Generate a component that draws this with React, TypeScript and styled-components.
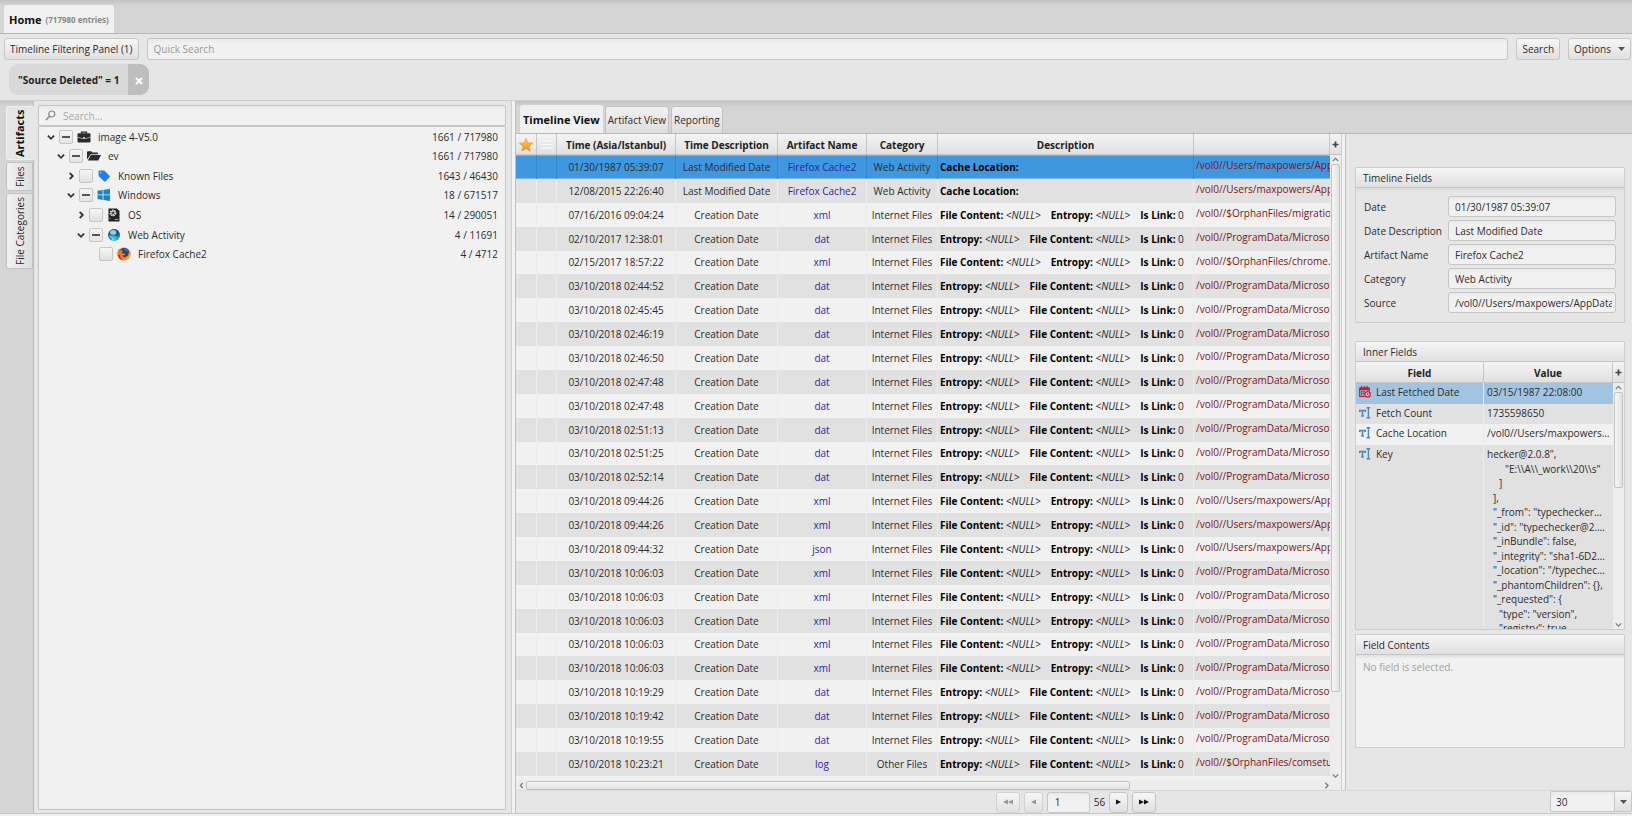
import React, { useEffect, useRef, useState } from "react";
import styled, { createGlobalStyle, css } from "styled-components";

const GlobalStyle = createGlobalStyle`
  *, *::before, *::after { box-sizing: border-box; }
  html, body { margin: 0; height: 100%; }
  #root { height: 100%; }
  body, button, input, select, table {
    font-family: "Open Sans", "Noto Sans", sans-serif;
    font-size: 10px;
    line-height: 16px;
    color: #2c2c2c;
  }
  body { background: #e6e6e6; }
  button, input, select { margin: 0; }
  a { text-decoration: none; }
`;

const line = "#c6c6c6";

const raised = css`
  background: linear-gradient(#f6f6f6, #e0e0e0);
  border: 1px solid ${line};
  border-radius: 3px;
`;

const sunken = css`
  background: linear-gradient(#e8e8e8, #f1f1f1 4px);
  border: 1px solid ${line};
  border-radius: 3px;
`;

/* ---------- shell ---------- */

const Shell = styled.div`
  display: flex;
  flex-direction: column;
  height: 100vh;
  min-height: 560px;
  padding-bottom: 2px;
  background: #f0f0f0;
  overflow: hidden;
`;

const tabStrip = css`
  display: flex;
  align-items: flex-end;
  background: linear-gradient(#c2c2c2, #d5d5d5 6px);
  border-bottom: 1px solid #b8b8b8;
`;

const WindowTabs = styled.nav`
  ${tabStrip}
  flex: none;
  height: 34px;
  padding-left: 4px;
`;

const HomeTab = styled.button`
  display: flex;
  align-items: center;
  gap: 4px;
  height: 28px;
  padding: 2px 5px 0;
  border: 0;
  border-radius: 3px 3px 0 0;
  background: #f0f0f0;
  color: #111;
  font-size: 11px;
  font-weight: 700;
  small { font-size: 8px; color: #888; }
`;

const Toolbar = styled.header`
  flex: none;
  background: #e6e6e6;
  padding: 4px 1px 0 4px;
  height: 67px;
  border-bottom: 1px solid #cfcfcf;
`;

const SearchRow = styled.form`
  display: flex;
  gap: 8px;
  height: 22px;
`;

const Button = styled.button`
  ${raised}
  display: flex;
  align-items: center;
  justify-content: center;
  gap: 7px;
  padding: 0 5px;
  height: 22px;
  white-space: nowrap;
`;

const QuickSearch = styled.input`
  ${sunken}
  flex: 1;
  min-width: 0;
  padding: 0 6px;
  height: 22px;
  &::placeholder { color: #999; }
`;

const Chip = styled.div`
  display: inline-flex;
  align-items: stretch;
  height: 31px;
  margin: 4px 0 0 5px;
  border-radius: 9px;
  overflow: hidden;
  background: #d9d9d9;
  color: #222;
  font-weight: 700;
  line-height: 31px;
  span { padding: 1px 9px 0; }
`;

const ChipClose = styled.button`
  display: flex;
  align-items: center;
  justify-content: center;
  width: 21px;
  padding: 2px 0 0;
  border: 0;
  background: #bebebe;
`;

const Main = styled.main`
  display: flex;
  flex: 1;
  min-height: 0;
  background: #e6e6e6;
  border-bottom: 1px solid ${line};
`;

/* ---------- left side ---------- */

const SideTabs = styled.nav`
  flex: none;
  display: flex;
  flex-direction: column;
  gap: 2px;
  width: 34px;
  padding: 5px 0 0 6px;
  background: linear-gradient(#c6c6c6, #d5d5d5 5px);
  border-right: 1px solid #bdbdbd;
`;

const SideTab = styled.button<{ $active?: boolean; $h: number }>`
  display: flex;
  align-items: center;
  justify-content: center;
  height: ${(p) => p.$h}px;
  width: ${(p) => (p.$active ? 28 : 27)}px;
  padding: 0;
  border: 1px solid ${(p) => (p.$active ? "#efefef" : "#c2c2c2")};
  border-left-color: ${(p) => (p.$active ? "#e6e6e6" : "#c2c2c2")};
  border-radius: 0 3px 3px 0;
  background: ${(p) => (p.$active ? "#e6e6e6" : "linear-gradient(270deg, #f2f2f2, #dedede)")};
  font-size: ${(p) => (p.$active ? 11 : 10)}px;
  font-weight: ${(p) => (p.$active ? 700 : 400)};
  color: ${(p) => (p.$active ? "#111" : "#2c2c2c")};
  writing-mode: vertical-rl;
  transform: rotate(180deg);
  white-space: nowrap;
`;

const TreePane = styled.section`
  flex: 0 0 477px;
  display: flex;
  flex-direction: column;
  padding: 4px 5px 3px 4px;
`;

const TreeSearch = styled.label`
  ${sunken}
  display: flex;
  align-items: center;
  gap: 7px;
  height: 21px;
  padding: 0 6px;
  border-radius: 2px;
  input {
    flex: 1;
    border: 0;
    padding: 0;
    outline: 0;
    background: transparent;
  }
  input::placeholder { color: #aaa; }
`;

const TreeBody = styled.div`
  flex: 1;
  background: #f1f1f1;
  border: 1px solid ${line};
`;

const TreeList = styled.ul`
  display: grid;
  grid-auto-rows: 1fr;
  height: 137px;
  margin: 0;
  padding: 0 7px 0 5px;
  list-style: none;
`;

const TreeItem = styled.li<{ $level: number }>`
  display: flex;
  align-items: center;
  padding-left: ${(p) => p.$level * 10}px;
`;

const Twisty = styled.button`
  display: flex;
  align-items: center;
  justify-content: center;
  width: 15px;
  height: 14px;
  padding: 0 1px 0 0;
  border: 0;
  background: none;
`;

const Tick = styled.input`
  appearance: none;
  ${raised}
  width: 14px;
  height: 14px;
  border-radius: 2px;
  &:indeterminate {
    background: linear-gradient(#555, #555) center / 8px 2px no-repeat, linear-gradient(#f6f6f6, #e4e4e4);
  }
`;

const TreeIcon = styled.span`
  display: flex;
  width: 14px;
  height: 14px;
  margin: 0 7px 0 4px;
`;

const TreeLabel = styled.label`flex: 1;`;

const Split = styled.div`
  flex: none;
  width: 5px;
  background: linear-gradient(90deg, #cfcfcf 1px, #f4f4f4 1px, #f0f0f0 4px, #c2c2c2 4px);
`;

/* ---------- centre ---------- */

const Work = styled.section`
  flex: 1;
  min-width: 0;
  display: flex;
  flex-direction: column;
`;

const ViewTabs = styled.nav`
  ${tabStrip}
  flex: none;
  height: 33px;
  gap: 2px;
  padding-left: 4px;
`;

const ViewTab = styled.button<{ $active?: boolean }>`
  height: ${(p) => (p.$active ? 28 : 27)}px;
  padding: 0 2px;
  border: 1px solid ${(p) => (p.$active ? "#f0f0f0" : "#c2c2c2")};
  border-bottom: 0;
  border-radius: 3px 3px 0 0;
  background: ${(p) => (p.$active ? "#f0f0f0" : "linear-gradient(#f2f2f2, #dedede)")};
  font-size: ${(p) => (p.$active ? 11 : 10)}px;
  font-weight: ${(p) => (p.$active ? 700 : 400)};
  color: ${(p) => (p.$active ? "#111" : "#2c2c2c")};
`;

const WorkBody = styled.div`
  flex: 1;
  min-height: 0;
  display: flex;
`;

const GridArea = styled.div`
  flex: 1;
  min-width: 0;
  display: flex;
  flex-direction: column;
`;

const GridRow = styled.div`
  flex: 1;
  min-height: 0;
  display: flex;
`;

const Clip = styled.div`
  flex: 1;
  min-width: 0;
  overflow: hidden;
  background: #f1f1f1;
`;

const DataTable = styled.table`
  width: 100%;
  height: 100%;
  table-layout: fixed;
  border-collapse: separate;
  border-spacing: 0;
`;

const headCell = css`
  height: 21px;
  padding: 1px 2px 0;
  background: linear-gradient(#f4f4f4, #e0e0e0);
  border-right: 1px solid ${line};
  border-bottom: 1px solid ${line};
  color: #222;
  font-weight: 700;
  text-align: center;
  white-space: nowrap;
  svg { display: block; margin: 0 auto; }
`;

const Th = styled.th<{ $w?: number }>`
  ${headCell}
  ${(p) => (p.$w ? `width: ${p.$w}px;` : "")}
`;

const Tr = styled.tr<{ $selected?: boolean }>`
  background: #f1f1f1;
  &:nth-child(even) { background: #e1e1e1; }
  ${(p) =>
    p.$selected &&
    css`
      background: #3f97df;
      td {
        border-right-color: #3489cf;
        box-shadow: inset 0 1px #79b5e8, inset 0 -1px #79b5e8;
      }
    `}
`;

const Td = styled.td<{ $align?: string }>`
  padding: 0 2px;
  border-right: 1px solid #ececec;
  text-align: ${(p) => p.$align || "center"};
  white-space: nowrap;
  overflow: hidden;
  &:last-child { border-right: 0; padding-right: 0; }
`;

const Filler = styled.td`
  height: 4px;
  padding: 0;
`;

const Fact = styled.span`
  margin-right: 10px;
  color: #222;
  b { color: #000; }
  &:last-child { margin-right: 0; }
`;

const Kind = styled.a`color: #2e1fa8;`;

const PathLink = styled.a`
  display: block;
  padding-bottom: 3px;
  color: #7a1420;
`;

const VBar = styled.div`
  flex: none;
  display: flex;
  flex-direction: column;
  align-items: center;
  width: 11px;
  background: #ededed;
`;

const PlusButton = styled.button`
  ${headCell}
  flex: none;
  display: flex;
  align-items: center;
  width: 100%;
  padding: 0;
  border-width: 0 0 1px;
`;

const BarArrow = styled.button`
  flex: none;
  display: flex;
  align-items: center;
  justify-content: center;
  width: 10px;
  height: 9px;
  padding: 0;
  border: 0;
  background: none;
`;

const VTrack = styled.div`
  flex: 1;
  width: 9px;
  min-height: 0;
`;

const VThumb = styled.div`
  border: 1px solid #c2c2c2;
  border-radius: 2px;
  background: linear-gradient(90deg, #f6f6f6, #e2e2e2);
`;

const HBar = styled.div`
  flex: none;
  display: flex;
  align-items: center;
  height: 10px;
  padding-right: 10px;
  background: #ededed;
`;

const HTrack = styled.div`
  flex: 1;
  height: 9px;
`;

const HThumb = styled.div`
  width: 76%;
  height: 9px;
  border: 1px solid #c2c2c2;
  border-radius: 2px;
  background: linear-gradient(#f6f6f6, #e2e2e2);
`;

const Pager = styled.footer`
  flex: none;
  display: grid;
  grid-template-columns: 1fr auto 1fr;
  height: 23px;
  border-top: 1px solid #d8d8d8;
`;

const PagerGroup = styled.div`
  grid-column: 2;
  display: flex;
  align-items: center;
  gap: 4px;
  padding-left: 4px;
`;

const PageButton = styled(Button)<{ $w: number }>`
  width: ${(p) => p.$w}px;
  height: 21px;
  padding: 0;
  color: #111;
  &:disabled { color: #999; border-color: #d2d2d2; }
`;

const PageInput = styled.input`
  ${sunken}
  width: 43px;
  height: 21px;
  padding: 0 7px;
`;

const SizeBox = styled.label`
  ${sunken}
  justify-self: end;
  display: flex;
  width: 82px;
  height: 21px;
  border-radius: 2px;
  select {
    appearance: none;
    flex: 1;
    padding: 0 5px;
    border: 0;
    background: none;
  }
  span {
    display: flex;
    align-items: center;
    justify-content: center;
    width: 17px;
    border-left: 1px solid ${line};
    background: linear-gradient(#f6f6f6, #e0e0e0);
  }
`;

/* ---------- details ---------- */

const Details = styled.aside`
  flex: 0 0 286px;
  min-width: 0;
  padding: 33px 7px 0 9px;
  background: #e6e6e6;
`;

const Panel = styled.section`
  border: 1px solid #cdcdcd;
  border-radius: 2px 2px 0 0;
`;

const PanelTitle = styled.h2`
  margin: 0;
  height: 20px;
  padding: 0 7px;
  border-bottom: 1px solid ${line};
  background: linear-gradient(#f5f5f5, #e0e0e0);
  font-size: 10px;
  font-weight: 400;
  line-height: 20px;
`;

const FieldList = styled.div`
  display: grid;
  gap: 3px;
  padding: 8px 8px 9px;
  background: linear-gradient(#dadada, #e6e6e6 4px);
`;

const FieldRow = styled.label`
  display: flex;
  align-items: center;
  span {
    flex: none;
    width: 84px;
    white-space: nowrap;
  }
  input {
    ${sunken}
    flex: 1;
    min-width: 0;
    height: 21px;
    padding: 0 3px 0 6px;
  }
`;

const InnerPanel = styled(Panel)`margin-top: 18px;`;

const InnerGrid = styled.div`
  display: flex;
  height: 267px;
  overflow: hidden;
  background: #e1e1e1;
`;

const InnerClip = styled.div`
  flex: 1;
  min-width: 0;
  overflow: hidden;
`;

const InnerTable = styled.table`
  width: 100%;
  table-layout: fixed;
  border-collapse: separate;
  border-spacing: 0;
`;

const InnerRow = styled.tr<{ $tone?: "selected" | "light" }>`
  height: ${(p) => (p.$tone ? 21 : 20)}px;
  background: ${(p) =>
    p.$tone === "selected" ? "#a0c4e1" : p.$tone === "light" ? "#f1f1f1" : "#e1e1e1"};
`;

const InnerTd = styled.td`
  padding: 1px 3px;
  border-right: 1px solid #ececec;
  vertical-align: top;
  white-space: nowrap;
  overflow: hidden;
  text-overflow: ellipsis;
  &:last-child { border-right: 0; padding-right: 3px; }
`;

const FieldName = styled.span`
  display: flex;
  align-items: center;
  gap: 5px;
`;

const JsonLines = styled.div`
  display: grid;
  grid-auto-rows: 1fr;
  height: 189px;
`;

const JsonLine = styled.div<{ $indent: number }>`
  padding-left: ${(p) => p.$indent * 6}px;
  overflow: hidden;
  text-overflow: ellipsis;
`;

const ContentsPanel = styled(Panel)`
  margin-top: 4px;
  background: #f1f1f1;
`;

const Empty = styled.p`
  margin: 0;
  height: 92px;
  padding: 4px 7px;
  background: linear-gradient(#dedede, #f1f1f1 4px);
  color: #a2a2a2;
`;

/* ---------- icons ---------- */

const Chevron = ({ dir, size = 9, color = "#333", w = 2 }: { dir: "up" | "down" | "left" | "right"; size?: number; color?: string; w?: number }) => {
  const d = { up: "M1 6.5 4.5 3 8 6.5", down: "M1 3 4.5 6.5 8 3", left: "M6 1 3 4.5 6 8", right: "M3 1 6.5 4.5 3 8" }[dir];
  return (
    <svg width={size} height={size} viewBox="0 0 9 9" fill="none" stroke={color} strokeWidth={w}>
      <path d={d} />
    </svg>
  );
};

const Caret = () => (
  <svg width="7" height="4" viewBox="0 0 7 4" fill="#555"><path d="M0 0h7L3.500 4z" /></svg>
);

const Plus = () => (
  <svg width="7" height="7" viewBox="0 0 7 7" stroke="#444" strokeWidth="1.700"><path d="M3.500.500v6M.500 3.500h6" /></svg>
);

const Cross = () => (
  <svg width="8" height="8" viewBox="0 0 8 8" stroke="#fff" strokeWidth="2"><path d="M1 1l6 6M7 1 1 7" /></svg>
);

const Arrows = ({ count, left }: { count: 1 | 2; left?: boolean }) => (
  <svg width={count * 5} height="6" viewBox={`0 0 ${count * 5} 6`} fill="currentColor">
    {Array.from({ length: count }, (_, i) => (
      <path key={i} d={left ? `M${i * 5 + 5} .5v5L${i * 5} 3z` : `M${i * 5} .5v5L${i * 5 + 5} 3z`} />
    ))}
  </svg>
);

const Magnifier = () => (
  <svg width="11" height="11" viewBox="0 0 11 11" fill="none" stroke="#888" strokeWidth="1.200">
    <circle cx="6.800" cy="4" r="3" />
    <path d="M4.600 6.200 1 10" strokeWidth="1.600" />
  </svg>
);

const Star = () => (
  <svg width="14" height="14" viewBox="0 0 14 14">
    <defs>
      <linearGradient id="star" x1="0" y1="0" x2="0" y2="1">
        <stop offset="0" stopColor="#ffd65a" />
        <stop offset="1" stopColor="#f58a14" />
      </linearGradient>
    </defs>
    <path d="M7 .6 8.900 4.900l4.600.4-3.500 3.100 1.100 4.700L7 10.600l-4.100 2.500L4 8.400.5 5.300l4.600-.4z" fill="url(#star)" stroke="#e8932a" strokeWidth=".7" />
  </svg>
);

const Lines = () => (
  <svg width="12" height="9" viewBox="0 0 12 9" fill="#fafafa" stroke="#d6d6d6" strokeWidth=".3">
    <path d="M0 0h12v2H0zM0 3.500h12v2H0zM0 7h12v2H0z" />
  </svg>
);

const Briefcase = () => (
  <svg width="14" height="14" viewBox="0 0 14 14">
    <path d="M4.500 3.500V2.200h5v1.300" fill="none" stroke="#2b2b2b" strokeWidth="1.300" />
    <path d="M1.500 3.200h11q1 0 1 1V7l-5 1.200H5.500L.5 7V4.200q0-1 1-1z" fill="#2b2b2b" />
    <path d="M.5 7.500l5 1.300h3l5-1.300v3.900q0 1-1 1h-11q-1 0-1-1z" fill="#2b2b2b" />
    <path d="M6 7.200h2v1.200H6z" fill="#f1f1f1" />
  </svg>
);

const FolderOpen = () => (
  <svg width="14" height="14" viewBox="0 0 14 14" fill="#2b2b2b">
    <path d="M0 10.500V3.200q0-.9.900-.9h3.300l1.200 1.300h4.700q.9 0 .9.900v.8H3.700z" />
    <path d="M3.900 6.100H14l-2.700 5.500H.8z" />
  </svg>
);

const Tag = () => (
  <svg width="14" height="14" viewBox="0 0 14 14">
    <path d="M1.500 2.500q0-.8.800-.9l4.400-.2q.5 0 .8.400l5.200 5.200q.5.500 0 1L8.400 12.600q-.5.400-1 0L2 7.400q-.3-.3-.3-.8z" fill="#1a80fa" />
    <circle cx="3.700" cy="3.600" r=".9" fill="#9cc8fb" />
  </svg>
);

const WindowsLogo = () => (
  <svg width="14" height="14" viewBox="0 0 14 14" fill="#1b84c4">
    <path d="M.5 2.800 5.600 2v4.500H.5zM6.400 1.900 13 .8v5.700H6.400zM.5 7.300h5.100v4.600l-5.100-.8zM6.400 7.300H13v5.800l-6.600-1z" />
  </svg>
);

const DriveIcon = () => (
  <svg width="14" height="14" viewBox="0 0 14 14">
    <path d="M1.500.5h8.300l2.700 2.600v10.400h-11z" fill="#222" />
    <circle cx="6" cy="5" r="2.600" fill="none" stroke="#eee" strokeWidth="1.600" strokeDasharray="1.500 .7" />
    <circle cx="6" cy="5" r="1.700" fill="#eee" />
    <circle cx="6" cy="5" r="1.100" fill="#222" />
    <path d="M2.500 10.500h1.200M7.500 11.500h4" stroke="#999" strokeWidth="1" />
  </svg>
);

const Globe = () => (
  <svg width="14" height="14" viewBox="0 0 14 14">
    <defs>
      <radialGradient id="globe" cx=".5" cy=".85" r=".9">
        <stop offset="0" stopColor="#4fd4ee" />
        <stop offset=".5" stopColor="#1782b4" />
        <stop offset="1" stopColor="#0b3a5c" />
      </radialGradient>
    </defs>
    <circle cx="7" cy="7" r="6" fill="url(#globe)" />
    <ellipse cx="6.300" cy="4.300" rx="3.200" ry="2.300" fill="#b9e2f2" opacity=".8" />
    <path d="M9 2.200q2 1.500 1.400 4.200L8.600 8" fill="none" stroke="#0e4a70" strokeWidth="1.200" />
    <path d="M2.500 8.500 5 9l1 3" fill="none" stroke="#8feaf8" strokeWidth="1" opacity=".8" />
  </svg>
);

const Firefox = () => (
  <svg width="14" height="14" viewBox="0 0 14 14">
    <circle cx="7" cy="7" r="6.500" fill="#e8601c" />
    <circle cx="7.400" cy="5.600" r="4.600" fill="#1d4a86" />
    <path d="M7 1.200q3 .3 4 3l-2-1z" fill="#4fa6dc" />
    <path d="M.6 5Q1 2.500 2.300 1.500q0 1.300.8 1.900 1.600-.3 2.900.4L4.800 5.600q.3 1.200 1.600 1 1.400-.4 2 .4-.8 2-3.200 1.500 1.600 2.400 4.200 1.300 3-1.500 2.200-5.500Q13.400 6 13.500 7A6.500 6.500 0 0 1 .6 8z" fill="#f07c1e" />
    <path d="M12.200 5.200q1.600 3.200-1.200 6-2.600 2-5.600 1.200 4.500-.4 6-3.400.9-1.900.8-3.800z" fill="#fbc22d" />
    <path d="M.7 8.200Q1.600 12 5.600 13.300 3 11 2.800 7.800z" fill="#b8301b" />
  </svg>
);

const Calendar = () => (
  <svg width="12" height="12" viewBox="0 0 12 12">
    <path d="M.7 2h9.600v3M.7 2v8.300h5" fill="none" stroke="#b8203c" strokeWidth="1.200" />
    <path d="M.5 1.700h10v2.600H.5z" fill="#b8203c" />
    <path d="M2.700 0v2M5.500 0v2M8.200 0v2" stroke="#b8203c" strokeWidth="1.200" />
    <path d="M2 5.500h1.300M4.300 5.500h1.300M2 7.500h1.300M4.300 7.500h1.300M2.700 5v4M5 5v4" stroke="#b8203c" strokeWidth="1" />
    <circle cx="8.600" cy="8.400" r="2.700" fill="#e7b9c5" stroke="#b8203c" strokeWidth="1.200" />
    <path d="M8.500 7v1.600h1.300" fill="none" stroke="#b8203c" strokeWidth=".8" />
  </svg>
);

const TextField = () => (
  <svg width="12" height="12" viewBox="0 0 12 12" fill="none" stroke="#4a86bd">
    <path d="M.7 5V3.500h5.600V5M3.500 3.500V9M2.200 9h2.600" strokeWidth="1.600" />
    <path d="M7.600.8h3.600M9.400.8v10M7.600 10.800h3.600" strokeWidth="1.400" />
  </svg>
);

/* ---------- data ---------- */

type TreeNode = { level: number; name: string; count: string; open?: boolean; partial?: boolean; leaf?: boolean; icon: React.ReactNode };

const tree: TreeNode[] = [
  { level: 0, name: "image 4-V5.0", count: "1661 / 717980", open: true, partial: true, icon: <Briefcase /> },
  { level: 1, name: "ev", count: "1661 / 717980", open: true, partial: true, icon: <FolderOpen /> },
  { level: 2, name: "Known Files", count: "1643 / 46430", icon: <Tag /> },
  { level: 2, name: "Windows", count: "18 / 671517", open: true, partial: true, icon: <WindowsLogo /> },
  { level: 3, name: "OS", count: "14 / 290051", icon: <DriveIcon /> },
  { level: 3, name: "Web Activity", count: "4 / 11691", open: true, partial: true, icon: <Globe /> },
  { level: 4, name: "Firefox Cache2", count: "4 / 4712", leaf: true, icon: <Firefox /> },
];

type Entry = [time: string, what: string, artifact: string, category: string, facts: "cache" | "content" | "entropy", path: string];

const M = "Last Modified Date";
const C = "Creation Date";
const users = "/vol0//Users/maxpowers/AppData/Local";
const program = "/vol0//ProgramData/Microsoft/Windows";

const entries: Entry[] = [
  ["01/30/1987 05:39:07", M, "Firefox Cache2", "Web Activity", "cache", users],
  ["12/08/2015 22:26:40", M, "Firefox Cache2", "Web Activity", "cache", users],
  ["07/16/2016 09:04:24", C, "xml", "Internet Files", "content", "/vol0//$OrphanFiles/migration.xml"],
  ["02/10/2017 12:38:01", C, "dat", "Internet Files", "entropy", program],
  ["02/15/2017 18:57:22", C, "xml", "Internet Files", "content", "/vol0//$OrphanFiles/chrome.VisualElements.xml"],
  ["03/10/2018 02:44:52", C, "dat", "Internet Files", "entropy", program],
  ["03/10/2018 02:45:45", C, "dat", "Internet Files", "entropy", program],
  ["03/10/2018 02:46:19", C, "dat", "Internet Files", "entropy", program],
  ["03/10/2018 02:46:50", C, "dat", "Internet Files", "entropy", program],
  ["03/10/2018 02:47:48", C, "dat", "Internet Files", "entropy", program],
  ["03/10/2018 02:47:48", C, "dat", "Internet Files", "entropy", program],
  ["03/10/2018 02:51:13", C, "dat", "Internet Files", "entropy", program],
  ["03/10/2018 02:51:25", C, "dat", "Internet Files", "entropy", program],
  ["03/10/2018 02:52:14", C, "dat", "Internet Files", "entropy", program],
  ["03/10/2018 09:44:26", C, "xml", "Internet Files", "content", users],
  ["03/10/2018 09:44:26", C, "xml", "Internet Files", "content", users],
  ["03/10/2018 09:44:32", C, "json", "Internet Files", "content", users],
  ["03/10/2018 10:06:03", C, "xml", "Internet Files", "content", program],
  ["03/10/2018 10:06:03", C, "xml", "Internet Files", "content", program],
  ["03/10/2018 10:06:03", C, "xml", "Internet Files", "content", program],
  ["03/10/2018 10:06:03", C, "xml", "Internet Files", "content", program],
  ["03/10/2018 10:06:03", C, "xml", "Internet Files", "content", program],
  ["03/10/2018 10:19:29", C, "dat", "Internet Files", "entropy", program],
  ["03/10/2018 10:19:42", C, "dat", "Internet Files", "entropy", program],
  ["03/10/2018 10:19:55", C, "dat", "Internet Files", "entropy", program],
  ["03/10/2018 10:23:21", C, "log", "Other Files", "entropy", "/vol0//$OrphanFiles/comsetup.log"],
];

const fields: [string, string][] = [
  ["Date", "01/30/1987 05:39:07"],
  ["Date Description", "Last Modified Date"],
  ["Artifact Name", "Firefox Cache2"],
  ["Category", "Web Activity"],
  ["Source", "/vol0//Users/maxpowers/AppData/Local"],
];

const json: [number, string][] = [
  [0, 'hecker@2.0.8",'],
  [3, '"E:\\\\A\\\\_work\\\\20\\\\s"'],
  [2, "]"],
  [1, "],"],
  [1, '"_from": "typechecker@2.0.8",'],
  [1, '"_id": "typechecker@2.0.8-beta",'],
  [1, '"_inBundle": false,'],
  [1, '"_integrity": "sha1-6D2oS7ZMWEzLNFg4",'],
  [1, '"_location": "/typechecker",'],
  [1, '"_phantomChildren": {},'],
  [1, '"_requested": {'],
  [2, '"type": "version",'],
  [2, '"registry": true,'],
];

/* ---------- parts ---------- */

function TreeTick({ id, partial }: { id: string; partial?: boolean }) {
  const ref = useRef<HTMLInputElement>(null);
  useEffect(() => {
    if (ref.current) ref.current.indeterminate = !!partial;
  }, [partial]);
  return <Tick ref={ref} id={id} type="checkbox" />;
}

function Facts({ kind }: { kind: Entry[4] }) {
  if (kind === "cache") return <Fact><b>Cache Location:</b></Fact>;
  const names = kind === "content" ? ["File Content:", "Entropy:"] : ["Entropy:", "File Content:"];
  return (
    <>
      {names.map((n) => (
        <Fact key={n}><b>{n}</b> <i>&lt;NULL&gt;</i></Fact>
      ))}
      <Fact><b>Is Link:</b> 0</Fact>
    </>
  );
}

function TimelineTable() {
  const [selected, setSelected] = useState(0);
  return (
    <DataTable>
      <thead>
        <tr>
          <Th $w={21} aria-label="Bookmarked"><Star /></Th>
          <Th $w={20} aria-label="Notes"><Lines /></Th>
          <Th $w={119}>Time (Asia/Istanbul)</Th>
          <Th $w={102}>Time Description</Th>
          <Th $w={89}>Artifact Name</Th>
          <Th $w={71}>Category</Th>
          <Th $w={256}>Description</Th>
          <Th aria-label="Source" />
        </tr>
      </thead>
      <tbody>
        {entries.map(([time, what, artifact, category, facts, path], i) => (
          <Tr key={i} $selected={i === selected} onClick={() => setSelected(i)}>
            <Td />
            <Td />
            <Td>{time}</Td>
            <Td>{what}</Td>
            <Td><Kind href="#artifact">{artifact}</Kind></Td>
            <Td>{category}</Td>
            <Td $align="left"><Facts kind={facts} /></Td>
            <Td $align="left"><PathLink href="#source">{path}</PathLink></Td>
          </Tr>
        ))}
        <tr><Filler colSpan={8} /></tr>
      </tbody>
    </DataTable>
  );
}

function DetailsPane() {
  return (
    <Details>
      <Panel>
        <PanelTitle>Timeline Fields</PanelTitle>
        <FieldList>
          {fields.map(([name, value]) => (
            <FieldRow key={name}>
              <span>{name}</span>
              <input readOnly value={value} />
            </FieldRow>
          ))}
        </FieldList>
      </Panel>

      <InnerPanel>
        <PanelTitle>Inner Fields</PanelTitle>
        <InnerGrid>
          <InnerClip>
            <InnerTable>
              <thead>
                <tr><Th $w={128}>Field</Th><Th>Value</Th></tr>
              </thead>
              <tbody>
                <InnerRow $tone="selected">
                  <InnerTd><FieldName><Calendar />Last Fetched Date</FieldName></InnerTd>
                  <InnerTd>03/15/1987 22:08:00</InnerTd>
                </InnerRow>
                <InnerRow>
                  <InnerTd><FieldName><TextField />Fetch Count</FieldName></InnerTd>
                  <InnerTd>1735598650</InnerTd>
                </InnerRow>
                <InnerRow $tone="light">
                  <InnerTd><FieldName><TextField />Cache Location</FieldName></InnerTd>
                  <InnerTd>{users}</InnerTd>
                </InnerRow>
                <InnerRow>
                  <InnerTd><FieldName><TextField />Key</FieldName></InnerTd>
                  <InnerTd>
                    <JsonLines>
                      {json.map(([indent, text], i) => <JsonLine key={i} $indent={indent}>{text}</JsonLine>)}
                    </JsonLines>
                  </InnerTd>
                </InnerRow>
              </tbody>
            </InnerTable>
          </InnerClip>
          <VBar>
            <PlusButton aria-label="Choose columns"><Plus /></PlusButton>
            <BarArrow aria-label="Scroll up"><Chevron dir="up" size={7} color="#777" w={1.5} /></BarArrow>
            <VTrack><VThumb style={{ height: "42%" }} /></VTrack>
            <BarArrow aria-label="Scroll down"><Chevron dir="down" size={7} color="#777" w={1.5} /></BarArrow>
          </VBar>
        </InnerGrid>
      </InnerPanel>

      <ContentsPanel>
        <PanelTitle>Field Contents</PanelTitle>
        <Empty>No field is selected.</Empty>
      </ContentsPanel>
    </Details>
  );
}

export default function App() {
  return (
    <Shell>
      <GlobalStyle />
      <WindowTabs>
        <HomeTab>Home <small>(717980 entries)</small></HomeTab>
      </WindowTabs>

      <Toolbar>
        <SearchRow onSubmit={(e) => e.preventDefault()}>
          <Button type="button">Timeline Filtering Panel (1)</Button>
          <QuickSearch placeholder="Quick Search" aria-label="Quick Search" />
          <Button type="submit">Search</Button>
          <Button type="button">Options <Caret /></Button>
        </SearchRow>
        <Chip>
          <span>"Source Deleted" = 1</span>
          <ChipClose aria-label="Remove filter"><Cross /></ChipClose>
        </Chip>
      </Toolbar>

      <Main>
        <SideTabs>
          <SideTab $active $h={54}>Artifacts</SideTab>
          <SideTab $h={29}>Files</SideTab>
          <SideTab $h={76}>File Categories</SideTab>
        </SideTabs>

        <TreePane>
          <TreeSearch>
            <Magnifier />
            <input placeholder="Search..." aria-label="Search artifacts" />
          </TreeSearch>
          <TreeBody>
            <TreeList>
              {tree.map((n) => (
                <TreeItem key={n.name} $level={n.level}>
                  {n.leaf ? (
                    <Twisty as="span" />
                  ) : (
                    <Twisty aria-label={`Toggle ${n.name}`}><Chevron dir={n.open ? "down" : "right"} size={8} /></Twisty>
                  )}
                  <TreeTick id={n.name} partial={n.partial} />
                  <TreeIcon>{n.icon}</TreeIcon>
                  <TreeLabel htmlFor={n.name}>{n.name}</TreeLabel>
                  <span>{n.count}</span>
                </TreeItem>
              ))}
            </TreeList>
          </TreeBody>
        </TreePane>

        <Split />

        <Work>
          <ViewTabs>
            <ViewTab $active>Timeline View</ViewTab>
            <ViewTab>Artifact View</ViewTab>
            <ViewTab>Reporting</ViewTab>
          </ViewTabs>

          <WorkBody>
            <GridArea>
              <GridRow>
                <Clip><TimelineTable /></Clip>
                <VBar>
                  <PlusButton aria-label="Choose columns"><Plus /></PlusButton>
                  <BarArrow aria-label="Scroll up"><Chevron dir="up" size={7} color="#777" w={1.5} /></BarArrow>
                  <VTrack><VThumb style={{ height: "87%" }} /></VTrack>
                  <BarArrow aria-label="Scroll down"><Chevron dir="down" size={7} color="#777" w={1.5} /></BarArrow>
                </VBar>
              </GridRow>
              <HBar>
                <BarArrow aria-label="Scroll left"><Chevron dir="left" size={7} color="#777" w={1.5} /></BarArrow>
                <HTrack><HThumb /></HTrack>
                <BarArrow aria-label="Scroll right"><Chevron dir="right" size={7} color="#777" w={1.5} /></BarArrow>
              </HBar>
            </GridArea>
            <Split />
            <DetailsPane />
          </WorkBody>

          <Pager>
            <PagerGroup>
              <PageButton $w={24} disabled aria-label="First page"><Arrows count={2} left /></PageButton>
              <PageButton $w={19} disabled aria-label="Previous page"><Arrows count={1} left /></PageButton>
              <PageInput defaultValue="1" aria-label="Page" />
              <span>56</span>
              <PageButton $w={19} aria-label="Next page"><Arrows count={1} /></PageButton>
              <PageButton $w={24} aria-label="Last page"><Arrows count={2} /></PageButton>
            </PagerGroup>
            <SizeBox>
              <select aria-label="Rows per page" defaultValue="30">
                <option>30</option>
                <option>60</option>
                <option>90</option>
              </select>
              <span><Caret /></span>
            </SizeBox>
          </Pager>
        </Work>
      </Main>
    </Shell>
  );
}
